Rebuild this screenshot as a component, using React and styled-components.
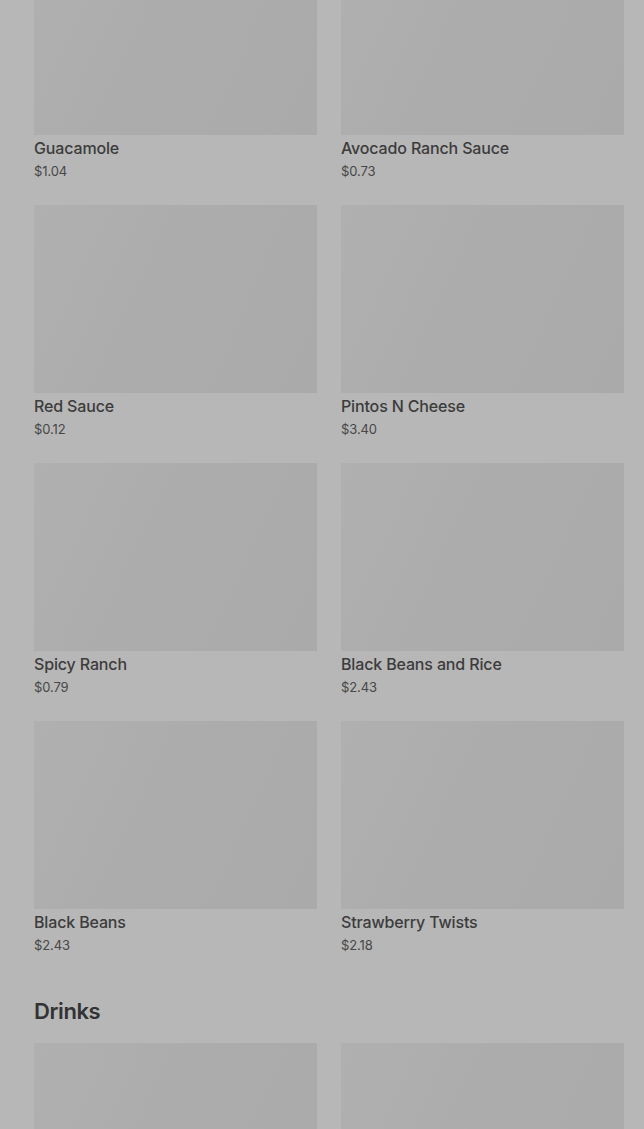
import React from "react";
import styled, { createGlobalStyle } from "styled-components";

const Global = createGlobalStyle`
  html, body { margin: 0; padding: 0; background: #b7b7b7; overflow: hidden; }
  body { font-family: Inter, "Noto Sans", "Liberation Sans", sans-serif; }
`;

const Page = styled.main`
  margin-top: -53px;
  padding: 0 20px 0 34px;
`;

const Section = styled.section`
  display: flex;
  flex-direction: column;
`;

const Heading = styled.h2`
  margin: 41px 0 18px;
  font-size: 22px;
  line-height: 28px;
  font-weight: 600;
  letter-spacing: -0.4px;
  color: #333333;
`;

const Grid = styled.div`
  display: grid;
  grid-template-columns: 1fr 1fr;
  column-gap: 24px;
  row-gap: 23px;
`;

const Card = styled.div`
  display: flex;
  flex-direction: column;
`;

const Thumb = styled.div`
  height: 188px;
  background: linear-gradient(115deg, #b0b0b0 0%, #acacac 45%, #aaaaaa 100%);
`;

const Name = styled.div`
  margin-top: 2px;
  font-size: 16px;
  line-height: 22px;
  font-weight: 500;
  letter-spacing: -0.15px;
  color: #3c3c3c;
`;

const Price = styled.div`
  margin-top: 1px;
  font-size: 13px;
  line-height: 22px;
  letter-spacing: -0.1px;
  color: #474747;
`;

const sides = [
  ["Guacamole", "$1.04"],
  ["Avocado Ranch Sauce", "$0.73"],
  ["Red Sauce", "$0.12"],
  ["Pintos N Cheese", "$3.40"],
  ["Spicy Ranch", "$0.79"],
  ["Black Beans and Rice", "$2.43"],
  ["Black Beans", "$2.43"],
  ["Strawberry Twists", "$2.18"],
];

const drinks = ["Drink 1", "Drink 2"];

export default function App() {
  return (
    <>
      <Global />
      <Page>
        <Section>
          <Grid>
            {sides.map(([n, p]) => (
              <Card key={n}>
                <Thumb />
                <Name>{n}</Name>
                <Price>{p}</Price>
              </Card>
            ))}
          </Grid>
        </Section>
        <Section>
          <Heading>Drinks</Heading>
          <Grid>
            {drinks.map((n) => (
              <Card key={n}>
                <Thumb />
              </Card>
            ))}
          </Grid>
        </Section>
      </Page>
    </>
  );
}
